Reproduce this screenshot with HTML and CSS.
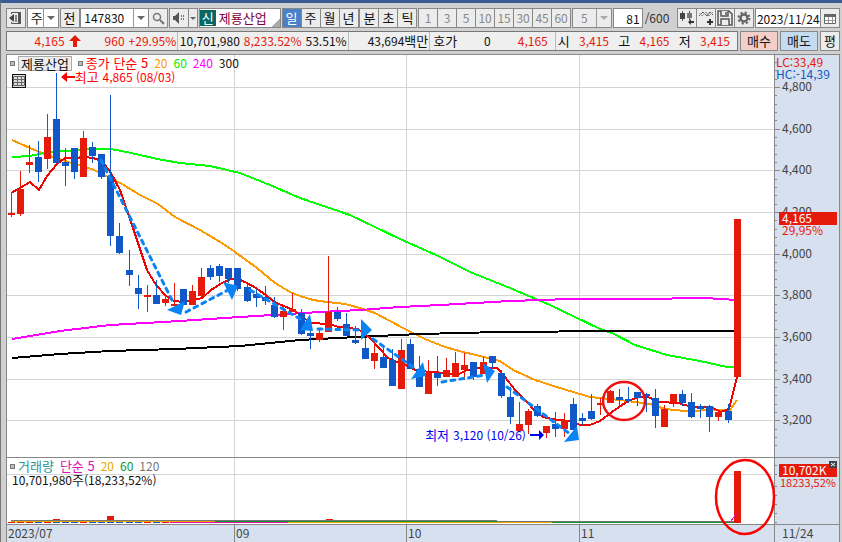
FILE: index.html
```html
<!DOCTYPE html>
<html lang="ko">
<head>
    <meta charset="UTF-8">
    <meta name="viewport" content="width=device-width, initial-scale=1.0">
    <title>제룡산업 일봉 차트</title>
    <link rel="stylesheet" href="styles.css">
</head>
<body>
    <div class="window">
        <div class="toolbar">
            <button class="btn" aria-label="패널">
                <svg width="14" height="14" viewBox="0 0 14 14"><path d="M2.500 3V1.500H12M2.500 11v1.500H12" fill="none" stroke="#555"/><path d="M0 7l5-4v8z" fill="#444"/><path d="M6 4h2v7H6z" fill="#888"/><path d="M9 1h3v12H9z" fill="#555"/></svg>
            </button>
            <label class="select w-cycle">
                <select aria-label="주기"><option>주</option></select>
            </label>
            <button class="btn">전</button>
            <div class="group">
                <label class="select w-code">
                    <select aria-label="종목코드"><option>147830</option></select>
                </label>
                <button class="btn" aria-label="검색">
                    <svg width="13" height="13" viewBox="0 0 13 13" fill="none" stroke="#777"><circle cx="5" cy="5" r="3.500" stroke-width="1.500"/><path d="M8 8l4 4" stroke-width="2.200"/></svg>
                </button>
            </div>
            <div class="group">
                <button class="btn" aria-label="소리">
                    <svg width="14" height="12" viewBox="0 0 14 12" fill="#555"><path d="M1 4h2l4-4v12L3 8H1z"/><path d="M9 3h1v2H9zM9 6h1v2H9zM11 3h1v2h-1zM11 6h1v2h-1z" fill="#777"/></svg>
                </button>
                <button class="btn btn-drop" aria-label="소리 목록"></button>
            </div>
            <button class="btn stock"><span class="badge">신</span>제룡산업</button>
            <div class="group">
                <button class="btn active">일</button>
                <button class="btn">주</button>
                <button class="btn">월</button>
                <button class="btn">년</button>
            </div>
            <div class="group">
                <button class="btn">분</button>
                <button class="btn">초</button>
                <button class="btn">틱</button>
            </div>
            <div class="group minutes">
                <button class="btn">1</button>
                <button class="btn">3</button>
                <button class="btn">5</button>
                <button class="btn">10</button>
                <button class="btn">15</button>
                <button class="btn">30</button>
                <button class="btn">45</button>
                <button class="btn">60</button>
            </div>
            <label class="select w-min disabled">
                <select aria-label="분" disabled><option>5</option></select>
            </label>
            <label class="count"><input type="text" value="81" aria-label="봉 개수">/600</label>
            <div class="group tools">
                <button class="btn" aria-label="봉 추가">
                    <svg width="16" height="16" viewBox="0 0 16 16"><path d="M3.500 1v10M10.500 1v9" stroke="#555"/><path d="M1 3h5v6H1z" fill="#444"/><path d="M8 3h5v5H8z" fill="#777"/><path d="M9 12l3-3v2h3v2h-3v2z" fill="#333"/></svg>
                </button>
                <button class="btn" aria-label="지표 추가">
                    <svg width="16" height="16" viewBox="0 0 16 16" fill="none"><path d="M1 6l4-4 4 4 3-4 3 3" stroke="#555"/><path d="M1 3l3 3 4-4 3 4 4-4" stroke="#999"/><path d="M9 12h6M12 9v6" stroke="#333" stroke-width="2"/></svg>
                </button>
                <button class="btn" aria-label="저장">
                    <svg width="16" height="16" viewBox="0 0 16 16" fill="#eee" stroke="#555" stroke-width="1.500"><path d="M1 1h11l3 3v11H1z"/><path d="M4 1v5h7V1M4 15V9h8v6M9 2v3"/></svg>
                </button>
                <button class="btn" aria-label="설정">
                    <svg width="14" height="14" viewBox="0 0 14 14" fill="none" stroke="#666"><circle cx="7" cy="7" r="3.500" stroke-width="2.500"/><circle cx="7" cy="7" r="5.500" stroke-width="2" stroke-dasharray="2.200 2.120"/></svg>
                </button>
            </div>
            <div class="group date">
                <input type="text" value="2023/11/24" aria-label="날짜">
                <button class="btn" aria-label="달력">
                    <svg width="12" height="11" viewBox="0 0 12 11"><path d="M.5 1.500h11v9H.5z" fill="#fff" stroke="#666"/><path d="M0 1h12v3H0z" fill="#666"/><path d="M4.500 4v6M8.500 4v6M1 7.500h10" stroke="#999"/></svg>
                </button>
            </div>
        </div>

        <div class="quote-row">
            <div class="quotes">
                <div class="cell price">
                    <span>4,165</span>
                    <svg width="12" height="12" viewBox="0 0 12 12"><path d="M6 0l6 6H8v6H4V6H0z" fill="#e61a0a"/></svg>
                    <span class="diff">960</span>
                    <span>+29.95%</span>
                </div>
                <div class="cell"><span>10,701,980</span><span class="up">8,233.52%</span><span>53.51%</span></div>
                <div class="cell"><span>43,694<span class="ko">백만</span></span></div>
                <div class="cell ask"><span class="ko">호가</span><span>0</span><span class="up">4,165</span></div>
                <div class="cell ohl">
                    <span class="ko">시</span><span class="up">3,415</span>
                    <span class="ko">고</span><span class="up">4,165</span>
                    <span class="ko">저</span><span class="up">3,415</span>
                </div>
            </div>
            <button class="btn trade buy">매수</button>
            <button class="btn trade sell">매도</button>
            <button class="btn">평</button>
        </div>

        <div class="chart">
            <div class="pane">
                <svg id="price" class="plot" height="402" viewBox="7 55 767 402" preserveAspectRatio="none"></svg>
                <div class="legend">
                    <i></i><span class="name">제룡산업</span><i></i>
                    <span class="c-red">종가 단순 5</span><span class="c-orange">20</span><span class="c-green">60</span><span class="c-magenta">240</span><span>300</span>
                </div>
                <button class="grid-btn" aria-label="표 보기">
                    <svg width="12" height="12" viewBox="0 0 12 12" fill="#ddd" stroke="#666"><path d="M.5 1.500h11v9H.5zM.5 4.500h11M.5 7.500h11M4.500 1.500v9M8.500 1.500v9"/></svg>
                </button>
                <div class="callout high">
                    <svg width="14" height="10" viewBox="0 0 14 10"><path d="M0 5l6-5v4h8v2H6v4z" fill="#f00"/></svg><span class="ko">최고</span> 4,865 (08/03)
                </div>
                <div class="callout low">
                    <span class="ko">최저</span> 3,120 (10/26)
                    <svg width="14" height="10" viewBox="0 0 14 10"><path d="M14 5L9 0v4H0v2h9v4z" fill="#00e"/></svg>
                </div>
            </div>
            <svg id="priceAxis" class="axis" width="65" height="402" viewBox="774 55 65 402"></svg>

            <div class="pane pane-volume">
                <svg id="volume" class="plot" height="66" viewBox="7 458 767 66" preserveAspectRatio="none"></svg>
                <div class="legend">
                    <i></i><span class="c-teal">거래량</span>
                    <span class="c-pink">단순 5</span><span class="c-gold">20</span><span class="c-forest">60</span><span class="c-gray">120</span>
                </div>
                <div class="volume-value">10,701,980<span class="ko">주</span>(18,233,52%)</div>
            </div>
            <svg id="volumeAxis" class="axis axis-volume" width="65" height="66" viewBox="774 458 65 66"></svg>

            <div class="dates">
                <span>2023/07</span><span>09</span><span>10</span><span>11</span><span class="last">11/24</span>
            </div>
        </div>
    </div>
    <script src="chart.js"></script>
</body>
</html>
```
FILE: styles.css
```css
* {
    margin: 0;
    padding: 0;
    box-sizing: border-box;
}

body,
button,
input,
select {
    font-family: "Noto Sans CJK KR", sans-serif;
    font-size: 12px;
    line-height: 16px;
    color: #111;
}

body {
    background-color: #d0d0d0;
}

.window {
    border-top: 3px solid #3a5a96;
    border-left: 1px solid #777;
    padding: 5px 2px 0 5px;
    overflow: hidden;
}

/* Toolbar */
.toolbar {
    display: flex;
    align-items: center;
    justify-content: space-between;
    height: 20px;
}

.group {
    display: flex;
}

.group > * + * {
    margin-left: -1px;
}

.btn {
    display: flex;
    align-items: center;
    justify-content: center;
    width: 20px;
    height: 20px;
    flex: none;
    border: 1px solid #888;
    background-color: #ececec;
    font-size: 13px;
}

.btn.active {
    background-color: #4a80c8;
    color: white;
}

.minutes .btn {
    color: #888;
    font-size: 12px;
}

.btn-drop,
.select {
    position: relative;
}

.btn-drop {
    width: 10px;
}

.btn-drop::after,
.select::after {
    content: "";
    border: 4px solid transparent;
    border-top-color: #666;
    border-bottom: none;
}

.btn-drop::after {
    border-width: 3px;
    border-bottom: none;
}

.select {
    display: flex;
    align-items: center;
    height: 20px;
    border: 1px solid #888;
    background-color: white;
    padding-right: 3px;
}

.select select {
    appearance: none;
    flex: 1;
    min-width: 0;
    height: 18px;
    border: none;
    border-right: 1px solid #999;
    background: none;
    padding-left: 3px;
    margin-right: 3px;
}

.w-cycle {
    width: 32px;
}

.w-cycle select {
    font-size: 13px;
}

.w-code {
    width: 69px;
}

.w-min {
    width: 40px;
}

.disabled {
    background-color: #ececec;
}

.disabled select {
    color: #888;
    opacity: 1;
    padding-left: 8px;
}

.disabled::after {
    border-top-color: #aaa;
}

.stock {
    width: 82px;
    justify-content: flex-start;
    gap: 3px;
    background: linear-gradient(135deg, transparent 50%, #aaa 50%) right bottom / 8px 8px no-repeat white;
    color: #800040;
}

.badge {
    width: 16px;
    height: 16px;
    background-color: #086860;
    color: white;
}

.count {
    display: flex;
    align-items: center;
    gap: 2px;
    color: #333;
}

.count input,
.date input {
    height: 20px;
    border: 1px solid #888;
    background-color: white;
}

.count input {
    width: 30px;
    padding-right: 2px;
    text-align: right;
}

.tools {
    margin-left: 7px;
}

.date input {
    width: 66px;
    padding-left: 1px;
}

/* Quote line */
.quote-row {
    display: flex;
    gap: 1px;
    margin-top: 3px;
}

.quotes {
    flex: 1;
    display: grid;
    grid-template-columns: 172fr 171fr 82fr 126fr 182fr;
    height: 20px;
    border: 1px solid #777;
    background-color: #efefef;
}

.cell {
    display: flex;
    align-items: center;
    justify-content: flex-end;
    gap: 4px;
    padding-right: 1px;
    border-right: 1px solid #bbb;
    white-space: nowrap;
}

.cell:last-child {
    border-right: none;
}

.price,
.up {
    color: #e61a0a;
}

.diff {
    margin-left: 20px;
}

.ko {
    font-size: 13px;
}

.ask {
    justify-content: space-between;
    padding: 0 7px 0 3px;
}

.ohl {
    justify-content: space-between;
    padding: 0 7px 0 2px;
}

.trade {
    width: 38px;
}

.trade.buy {
    background-color: #f4cfca;
}

.trade.sell {
    background-color: #c5dbf2;
}

.quote-row .btn {
    margin-left: 1px;
}

/* Chart */
.chart {
    display: grid;
    grid-template-columns: 1fr 65px;
    margin-top: 3px;
    border: 1px solid #888;
    border-bottom: none;
    background-color: white;
}

.pane {
    position: relative;
    min-width: 0;
}

.plot {
    display: block;
    width: 100%;
}

.plot polyline {
    shape-rendering: crispEdges;
}

.axis {
    display: block;
    background-color: #d6e0ef;
}

.pane-volume,
.axis-volume {
    border-top: 1px solid #888;
    box-sizing: content-box;
}

.pane-volume .plot {
    position: relative;
    z-index: 1;
    overflow: visible;
}

.axis text {
    fill: #444;
}

.axis .small {
    font-size: 11px;
}

.legend {
    position: absolute;
    z-index: 2;
    top: 0;
    left: 3px;
    display: flex;
    align-items: center;
    gap: 6px;
    font-size: 12px;
    white-space: nowrap;
}

.legend i {
    width: 5px;
    height: 5px;
    border: 1px solid #777;
    background-color: #bbb;
    margin-right: -3px;
}

.legend .name {
    height: 15px;
    line-height: 13px;
    padding: 0 2px;
    border: 1px solid #aaa;
    background-color: #eee;
    font-size: 13px;
}

.legend .c-red,
.legend .c-teal,
.legend .c-pink {
    font-size: 13px;
}

.volume-value {
    position: absolute;
    z-index: 2;
    top: 14px;
    left: 5px;
}

.grid-btn {
    position: absolute;
    top: 19px;
    left: 5px;
    width: 14px;
    height: 14px;
    border: 1px solid #111;
    background-color: #ddd;
}

.grid-btn svg {
    display: block;
}

.callout {
    position: absolute;
    display: flex;
    align-items: center;
    gap: 4px;
    white-space: nowrap;
}

.callout.high {
    top: 14px;
    left: 7%;
    color: #f00;
}

.callout.high svg {
    margin-right: -4px;
}

.callout.low {
    bottom: 14px;
    right: 30%;
    color: #00e;
}

.c-red { color: #f00; }
.c-orange { color: #f90; }
.c-green { color: #0e0; }
.c-magenta { color: #f0f; }
.c-teal { color: #2a9494; }
.c-pink { color: #e010b0; }
.c-gold { color: #eaa800; }
.c-forest { color: #109830; }
.c-gray { color: #777; }

.dates {
    grid-column: 1 / -1;
    display: grid;
    grid-template-columns: 227fr 172fr 173fr 195fr 65px;
    height: 18px;
    border-top: 1px solid #888;
    background-color: #d6e0ef;
    color: #444;
}

.dates span {
    padding-left: 1px;
    border-left: 1px solid #888;
}

.dates span:first-child {
    border-left: none;
}

.dates .last {
    padding-left: 7px;
}
```
FILE: chart.js
```javascript
// [high, low, body top, body bottom, rising]
const candles = [
    [192, 217, 213, 215, 1], [171, 216, 189, 214, 1], [145, 173, 162, 165, 1], [141, 182, 157, 172, 0],
    [114, 169, 137, 159, 1], [73, 163, 119, 163, 0], [148, 186, 162, 166, 0], [148, 179, 148, 172, 0],
    [131, 177, 138, 177, 1], [142, 163, 147, 156, 0], [154, 179, 154, 177, 0], [95, 246, 176, 236, 0],
    [223, 254, 236, 253, 0], [250, 286, 270, 275, 0], [275, 309, 288, 294, 0], [285, 312, 295, 297, 1],
    [280, 304, 295, 304, 0], [294, 306, 299, 303, 1], [283, 306, 304, 306, 1], [289, 305, 289, 305, 0],
    [285, 305, 291, 305, 1], [268, 297, 277, 296, 1], [265, 280, 268, 277, 0], [264, 282, 266, 276, 0],
    [268, 283, 268, 279, 0], [268, 291, 268, 289, 0], [284, 302, 287, 301, 0], [289, 307, 294, 298, 0],
    [286, 305, 297, 301, 0], [297, 318, 305, 317, 0], [306, 330, 311, 317, 1], [293, 312, 309, 312, 1],
    [309, 335, 313, 334, 0], [320, 349, 333, 336, 0], [330, 342, 333, 340, 1], [256, 332, 312, 332, 1],
    [307, 321, 312, 319, 0], [313, 336, 324, 336, 0], [326, 344, 340, 343, 0], [338, 359, 348, 359, 0],
    [341, 369, 353, 361, 1], [347, 368, 357, 368, 0], [349, 386, 360, 386, 0], [339, 389, 350, 389, 1],
    [339, 369, 344, 369, 0], [356, 387, 369, 387, 0], [360, 394, 373, 394, 1], [356, 386, 373, 378, 0],
    [358, 377, 370, 377, 1], [352, 377, 363, 377, 1], [353, 380, 365, 370, 1], [362, 380, 362, 377, 0],
    [357, 374, 362, 374, 1], [356, 368, 356, 363, 0], [370, 398, 373, 396, 0], [387, 424, 397, 417, 0],
    [402, 431, 424, 431, 1], [409, 434, 411, 425, 1], [404, 417, 406, 416, 0], [426, 438, 426, 433, 1],
    [412, 437, 424, 429, 0], [413, 437, 420, 429, 1], [398, 430, 404, 430, 0], [413, 425, 418, 421, 0],
    [394, 420, 411, 419, 0], [398, 415, 403, 405, 1], [390, 403, 391, 403, 1], [389, 408, 397, 400, 0],
    [387, 403, 399, 401, 0], [392, 406, 392, 398, 0], [393, 412, 394, 396, 0], [389, 428, 398, 416, 0],
    [405, 427, 409, 427, 1], [394, 407, 394, 402, 1], [390, 406, 394, 403, 0], [393, 418, 402, 417, 0],
    [404, 418, 406, 409, 0], [405, 432, 406, 417, 0], [412, 421, 412, 417, 1], [404, 423, 411, 420, 0],
    [219, 377, 219, 377, 1]
];

const averages = [
    ['#f90', '12,140 30,148 47,155 62,160 92,169 110,178 122,184 140,195 158,204 175,217 200,230 222,243 235,252 257,268 275,283 290,292 300,296 313,300 327,302 345,304 360,308 375,313 390,321 403,328 425,339 445,347 463,352 480,356 500,361 513,370 535,380 560,388 590,397 620,400 650,404 665,409 685,411 715,410 730,410 737,400'],
    ['#0f0', '12,157 30,156 48,152 65,151 93,149 110,149 122,151 140,155 157,159 180,163 210,166 240,173 270,185 300,198 350,215 400,239 436,255 470,272 510,288 550,305 600,329 612,333 635,345 667,355 700,361 727,367 737,367'],
    ['#f0f', '12,339 60,331 110,325 180,321 240,317 320,312 360,310 400,307 440,305 510,301 570,299 640,299 705,298 737,300'],
    ['#000', '12,358 60,354 110,351 175,349 240,346 300,340 357,337 420,334 500,332 620,331 737,331']
];

const shortAverage = '11,193 20,188 30,182 39,190 47,176 57,164 65,158 75,158 84,157 93,158 102,161 111,173 120,190 128,213 138,243 147,270 156,285 166,296 174,301 184,302 193,300 202,298 211,290 222,283 231,279 238,279 247,283 256,288 267,296 276,303 284,306 293,310 303,317 310,323 330,324 338,327 347,328 358,329 370,338 378,347 388,358 397,362 408,366 417,371 435,372 457,375 467,370 480,368 497,368 505,377 515,390 525,400 535,411 543,417 557,420 570,421 580,425 590,425 600,421 612,412 622,405 630,400 640,397 648,397 660,402 678,403 685,405 693,407 705,407 713,408 721,412 729,409 737,377';

// Dashed trend lines with their arrow heads
const trends = [
    ['M101 160L174 304', '167,310 185,301 181,315'],
    ['M186 312L230 289', '223,282 238,286 232,300'],
    ['M250 290L302 320', '310,314 313,331 300,330'],
    ['M318 329L360 330', '361,319 372,330 361,340'],
    ['M373 339L413 367', '423,362 426,376 411,379'],
    ['M442 382L485 375', '483,363 495,371 487,383'],
    ['M507 387L570 434', '577,426 579,440 564,442']
];

const months = [234, 406, 579];
const levels = [[4800, 87], [4600, 129], [4400, 170], [4200, 212], [4000, 254], [3800, 295], [3600, 337], [3400, 379], [3200, 420]];
const RED = '#e61a0a';
const BLUE = '#1058c8';

function rect(x, y, w, h, color) {
    return `<rect x="${x}" y="${y}" width="${w}" height="${h}" fill="${color}"/>`;
}

function line(points, color, width) {
    return `<polyline points="${points}" fill="none" stroke="${color}" stroke-width="${width}"/>`;
}

function candleX(i) {
    return Math.floor(11.1 + i * 9.075);
}

function drawPrice() {
    let out = months.map(x => rect(x, 55, 1, 402, '#d4d4d4')).join('');
    out += levels.map(([, y]) => rect(7, y, 766, 1, '#d4d4d4')).join('');
    out += averages.map(([color, points]) => line(points, color, 2)).join('');
    out += line(shortAverage, '#f00000', 2);
    candles.forEach(([high, low, top, bottom, up], i) => {
        const x = candleX(i);
        const color = up ? RED : BLUE;
        out += rect(x, high, 1, low - high, color) + rect(x - 3, top, 7, bottom - top, color);
    });
    trends.forEach(([path, head]) => {
        out += `<path d="${path}" stroke="#0a84f4" stroke-width="3" stroke-dasharray="4 5" stroke-linecap="round"/>`;
        out += `<polygon points="${head}" fill="#0a84f4"/>`;
    });
    out += '<ellipse cx="624" cy="401" rx="21" ry="19" fill="none" stroke="#f01010" stroke-width="2.5"/>';
    document.getElementById('price').innerHTML = out;
}

function drawPriceAxis() {
    let out = rect(774, 55, 1, 402, '#888');
    for (let i = -3; i < 44; i++) {
        out += rect(775, Math.round(87 + i * 8.33), 2, 1, '#888');
    }
    levels.forEach(([value, y]) => {
        out += rect(775, y, 5, 1, '#888') + `<text x="782" y="${y + 4}">${value.toLocaleString('en-US')}</text>`;
    });
    out += `<text x="776" y="67" style="fill:${RED}">LC:33,49</text><text x="776" y="79" style="fill:${BLUE}">HC:-14,39</text>`;
    out += rect(779, 212, 58, 13, RED) + '<text x="782" y="223" style="fill:#fff">4,165</text>';
    out += `<text x="782" y="235" style="fill:${RED}">29,95%</text>`;
    document.getElementById('priceAxis').innerHTML = out;
}

function drawVolume() {
    let out = months.map(x => rect(x, 458, 1, 66, '#d4d4d4')).join('') + rect(7, 474, 766, 1, '#d4d4d4');
    candles.slice(0, 18).forEach((candle, i) => {
        out += rect(candleX(i) - 3, 522, 7, 1, candle[4] ? RED : BLUE);
    });
    out += rect(53, 519, 7, 2, RED) + rect(107, 516, 7, 4, RED) + rect(326, 519, 7, 1, RED);
    out += rect(11, 520, 486, 1, '#777') + rect(497, 521, 237, 1, '#777');
    out += rect(11, 521, 204, 1, '#eaa800') + rect(215, 521, 282, 1, '#109830');
    out += rect(170, 522, 118, 1, '#e010b0') + rect(288, 522, 264, 1, '#eaa800') + rect(552, 522, 182, 1, '#109830');
    out += rect(734, 471, 7, 52, RED);
    out += line('730,522 737,513', '#e010b0', 1);
    out += '<ellipse cx="745" cy="497" rx="29" ry="37" fill="none" stroke="#f00" stroke-width="2.5"/>';
    document.getElementById('volume').innerHTML = out;
}

function drawVolumeAxis() {
    let out = rect(774, 458, 1, 66, '#888');
    out += [465, 474, 486, 495, 504, 513, 522].map(y => rect(775, y, 2, 1, '#888')).join('');
    out += rect(779, 464, 58, 13, RED) + '<text x="782" y="475" style="fill:#fff">10,702K</text>';
    out += `<text class="small" x="780" y="487" style="fill:${RED}">18233,52%</text>`;
    out += rect(829, 461, 8, 7, '#444') + '<path d="M831 463l4 3M835 463l-4 3" stroke="#fff"/>';
    document.getElementById('volumeAxis').innerHTML = out;
}

drawPrice();
drawPriceAxis();
drawVolume();
drawVolumeAxis();
```
